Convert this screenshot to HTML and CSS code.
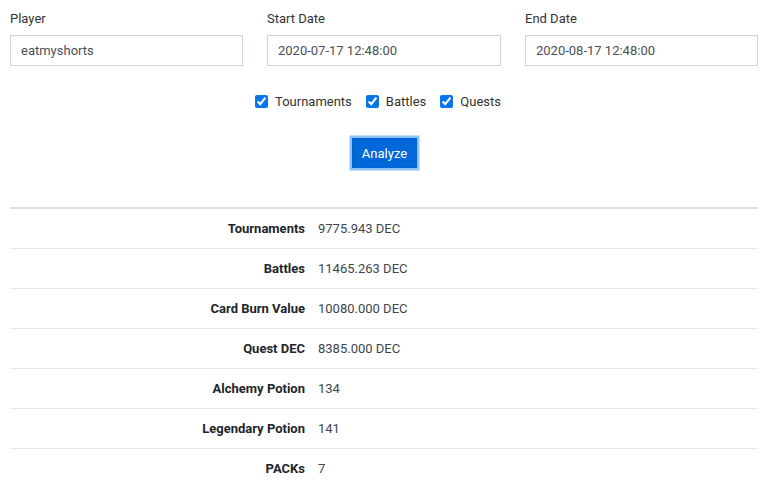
FILE: index.html
```html
<!DOCTYPE html>
<html>
<head>
<meta charset="utf-8">
<link rel="stylesheet" href="styles.css">
</head>
<body>
<div class="page">
  <div class="fields">
    <div class="field">
      <label class="label">Player</label>
      <input class="input" type="text" value="eatmyshorts">
    </div>
    <div class="field">
      <label class="label">Start Date</label>
      <input class="input" type="text" value="2020-07-17 12:48:00">
    </div>
    <div class="field">
      <label class="label">End Date</label>
      <input class="input" type="text" value="2020-08-17 12:48:00">
    </div>
  </div>
  <div class="checks">
    <label class="check"><input type="checkbox" checked><span>Tournaments</span></label>
    <label class="check"><input type="checkbox" checked><span>Battles</span></label>
    <label class="check"><input type="checkbox" checked><span>Quests</span></label>
  </div>
  <div class="actions">
    <button class="btn">Analyze</button>
  </div>
  <div class="results">
    <div class="row"><div class="key">Tournaments</div><div class="val">9775.943 DEC</div></div>
    <div class="row"><div class="key">Battles</div><div class="val">11465.263 DEC</div></div>
    <div class="row"><div class="key">Card Burn Value</div><div class="val">10080.000 DEC</div></div>
    <div class="row"><div class="key">Quest DEC</div><div class="val">8385.000 DEC</div></div>
    <div class="row"><div class="key">Alchemy Potion</div><div class="val">134</div></div>
    <div class="row"><div class="key">Legendary Potion</div><div class="val">141</div></div>
    <div class="row"><div class="key">PACKs</div><div class="val">7</div></div>
  </div>
</div>
</body>
</html>
```
FILE: styles.css
```css
* { box-sizing: border-box; }
html, body { margin: 0; padding: 0; background: #fff; }
body {
  font-family: Roboto, "Liberation Sans", sans-serif;
  font-size: 13px;
  line-height: 21px;
  color: #212529;
}
.page { padding: 8px 10px 0; }
.fields {
  display: grid;
  grid-template-columns: 233px 234px 233px;
  column-gap: 24px;
}
.field { display: flex; flex-direction: column; }
.label { display: block; margin-bottom: 6px; color: #333; }
.input {
  height: 31px;
  border: 1px solid #ced4da;
  border-radius: 0;
  padding: 0 10px;
  font-family: inherit;
  font-size: 13px;
  color: #495057;
  outline: none;
  width: 100%;
}
.checks {
  margin-top: 25px;
  display: flex;
  justify-content: center;
  gap: 14px;
  height: 21px;
  align-items: center;
  padding-left: 0;
  padding-right: 12px;
}
.check { display: flex; align-items: center; gap: 7px; color: #333; }
.check input {
  margin: 0;
  width: 13px;
  height: 13px;
  accent-color: #0a74ea;
}
.actions {
  display: flex;
  justify-content: center;
  margin-top: 23px;
  padding-left: 1px;
}
.btn {
  width: 65px;
  height: 30px;
  margin: 3px 0;
  background: #0069d9;
  border: 1px solid #0062cc;
  border-radius: 0;
  color: #fff;
  font-family: inherit;
  font-size: 13px;
  padding: 0;
  box-shadow: 0 0 0 2.5px #8cc4f8;
}
.results {
  margin-top: 36px;
  border-top: 2px solid #dee2e6;
}
.row {
  display: grid;
  grid-template-columns: 303px 1fr;
  height: 40px;
  align-items: center;
  border-bottom: 1px solid #e5e8eb;
}
.key {
  text-align: right;
  padding-right: 8px;
  font-weight: 700;
  color: #212529;
}
.val {
  padding-left: 5px;
  color: #3d4650;
}
```
